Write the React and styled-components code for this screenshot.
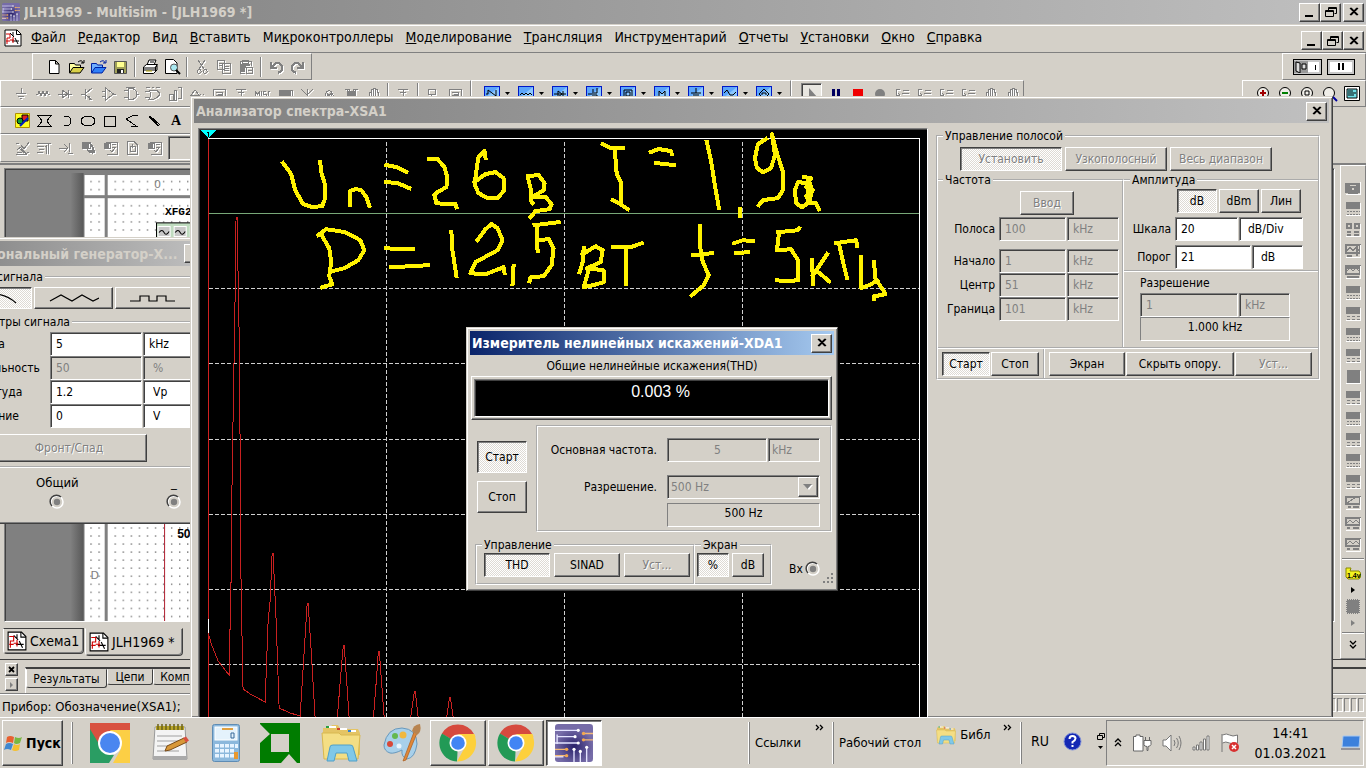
import React, { useId } from 'react';
import styled, { createGlobalStyle, css } from 'styled-components';

const FACE = '#d4d0c8';
const DARK = '#404040';
const MID = '#808080';
const UI = '"DejaVu Sans Condensed", "Noto Sans", sans-serif';

const Global = createGlobalStyle`
  * { box-sizing: border-box; }
  html, body, #root { height: 100%; }
  body { margin: 0; overflow: hidden; background: ${FACE}; color: #000; font: 12px/16px ${UI}; }
  button, input, select { font: inherit; color: inherit; margin: 0; border-radius: 0; }
  svg { display: block; flex: none; }
`;

const raised = css`
  border: 1px solid;
  border-color: #fff ${DARK} ${DARK} #fff;
  box-shadow: inset -1px -1px 0 ${MID};
`;
const sunken = css`
  border: 1px solid;
  border-color: ${MID} #fff #fff ${MID};
  box-shadow: inset 1px 1px 0 ${DARK};
`;
const checker = css`
  background: repeating-conic-gradient(#fff 0 25%, #dedad4 0 50%) 0 0 / 2px 2px;
`;

/* ---------- shared controls ---------- */
const Push = styled.button`
  ${raised}
  background: ${FACE};
  padding: 0;
  width: ${(p) => p.$w}px;
  height: ${(p) => p.$h || 24}px;
  text-align: center;
  white-space: nowrap;
  flex: none;
  display: flex;
  align-items: center;
  justify-content: center;
  ${(p) => p.$on && css`
    ${checker}
    border-color: ${DARK} #fff #fff ${DARK};
    box-shadow: inset 1px 1px 0 ${MID};
  `}
  &:disabled { color: ${MID}; text-shadow: 1px 1px 0 #fff; }
`;

const Box = styled.input`
  ${sunken}
  width: ${(p) => p.$w}px;
  height: 24px;
  padding: 0 4px 0 ${(p) => p.$pad || 5}px;
  background: #fff;
  text-align: ${(p) => p.$align || 'left'};
  flex: none;
  outline: none;
  &:disabled { background: ${FACE}; color: ${MID}; }
`;

const Result = styled.output`
  display: block;
  border: 1px solid;
  border-color: ${MID} #fff #fff ${MID};
  height: ${(p) => p.$h || 24}px;
  width: ${(p) => p.$w}px;
  line-height: 18px;
  text-align: center;
`;

const Group = styled.fieldset`
  margin: 0;
  padding: 0;
  min-width: 0;
  border: 2px groove #fff;
  border-width: ${(p) => p.$edges || '2px'};
  width: ${(p) => (p.$w ? `${p.$w}px` : 'auto')};
  flex: ${(p) => (p.$grow ? '1' : 'none')};
`;
const Legend = styled.legend`
  margin-left: ${(p) => p.$x || 5}px;
  padding: 0 2px;
  height: 16px;
  line-height: 16px;
`;

const FieldRow = styled.div`
  display: flex;
  align-items: center;
  gap: 1px;
  margin-top: ${(p) => p.$mt || 0}px;
`;
const RowLabel = styled.label`
  width: ${(p) => p.$w}px;
  text-align: ${(p) => p.$align || 'right'};
  margin-right: ${(p) => p.$gap || 3}px;
  flex: none;
  white-space: nowrap;
`;

function Field({ label, labelW, gap, align, value, w, unit, unitW, disabled, unitPad, mt, valueAlign }) {
  const id = useId();
  return (
    <FieldRow $mt={mt}>
      <RowLabel htmlFor={id} $w={labelW} $gap={gap} $align={align}>{label}</RowLabel>
      <Box id={id} $w={w} defaultValue={value} disabled={disabled} $align={valueAlign} />
      <Box $w={unitW} defaultValue={unit} disabled={disabled} $pad={unitPad} aria-label={`${label} ${unit}`} />
    </FieldRow>
  );
}

function Terminal() {
  return (
    <svg width="16" height="16" viewBox="0 0 16 16">
      <circle cx="8" cy="8" r="6" fill={FACE} stroke="#fff" strokeWidth="1.500" />
      <path d="M3 12A6 6 0 0 1 12 3" fill="none" stroke={DARK} strokeWidth="1.500" />
      <circle cx="8" cy="8" r="3.200" fill={MID} />
    </svg>
  );
}

/* ---------- window chrome ---------- */
const Caption = styled.header`
  display: flex;
  align-items: center;
  height: ${(p) => p.$h || 24}px;
  padding: 0 2px;
  flex: none;
  background: linear-gradient(90deg, ${(p) => (p.$active ? '#0a246a, #a6caf0' : '#808080, #c0c0c0')});
  color: ${(p) => (p.$active ? '#fff' : FACE)};
`;
const CaptionText = styled.h2`
  margin: 0;
  flex: 1;
  font: bold ${(p) => p.$size || 14}px/20px ${UI};
  white-space: nowrap;
  overflow: hidden;
`;
const SysButton = styled.button`
  ${raised}
  background: ${FACE};
  width: 21px;
  height: 19px;
  padding: 0;
  flex: none;
  display: grid;
  place-items: center;
`;
const SysGroup = styled.div`
  display: flex;
  flex: none;
  margin-top: ${(p) => p.$mt || 0}px;
  & > :last-child { margin-left: ${(p) => p.$gap || 0}px; }
`;
const CROSS = 'M3 2L10 9M4 2L11 9M10 2L3 9M11 2L4 9';
const SYS = {
  close: <path d={CROSS} stroke="#000" strokeWidth="1.200" />,
  min: <path d="M2 10h8" stroke="#000" strokeWidth="2" />,
  restore: <path d="M4.500 4V1.500h8v6h-2M4 2.500h9M1.500 4.500h8v6h-8zM1 5.500h9" stroke="#000" fill="none" />,
};
function Sys({ kind, label }) {
  return (
    <SysButton aria-label={label}>
      <svg width="14" height="12" viewBox="0 0 14 12">{SYS[kind]}</svg>
    </SysButton>
  );
}
const Window = styled.section`
  position: absolute;
  display: flex;
  flex-direction: column;
  background: ${FACE};
  border: 1px solid;
  border-color: ${FACE} ${DARK} ${DARK} ${FACE};
  box-shadow: inset 1px 1px 0 #fff, inset -1px -1px 0 ${MID};
  padding: 3px;
`;

/* ---------- small glyphs ---------- */
const GLYPH = {
  ground: 'M8 2v5M3 7.500h10M5 10.500h6M7 12.500h2',
  resistor: 'M1 8h2l1-3 2 5 2-5 2 5 2-5 1 3h2',
  diode: 'M1 8h14M5 4v8l6-4zM11.500 4v8',
  transistor: 'M2 8h4M6.500 3v10M7 7l6-5M7 9l6 5M10 10v3h3',
  opamp: 'M1 5.500h3M1 10.500h3M4.500 2v12l8-6zM12 8h3',
  gate: 'M1 4.500h4M1 11.500h4M5 2.500h4q5 1 5 5.500t-5 5.500h-4zM3 1h9M14 8h2',
  cmos: 'M0 5.500h4M0 11.500h4M4 4q3 4 0 9h5q4-1 6-5-2-4-6-4zM1 1.500h4M7 1.500h2M11 1.500h4',
  bars: 'M2.500 8v6h4v-6zM7.500 4v10h2V4zM10.500 1.500h4v11h-4',
  wedge: 'M2 9l4-5 4 5zM11 8.500h1M14 8.500h1',
  misc: 'M0.500 11V5.500L2.500 8l2-2.500V11M6.500 5v6M11 5.500H8.500v2.500H11v2.500H8.500M15 5.500h-2v5h2',
  box: 'M2.500 3.500h12v9h-12zM5 6h6v3H5M7 8h4',
  block: 'M2 4h13v9H2zM3 5h11M3 7h11M3 9h11M3 11h11M3 6h11M3 8h11M3 10h11',
  antenna: 'M2 3l6 6 6-6M8 3v11',
  motor: 'M1 12h3V9q4-9 8 0v3h3M6 12V7l2 3 2-3v5',
  chip: 'M2 3h4v2h4V3h5M4 4v9M6 5v8M8 5v8M10 5v8M12 4v9M5 5v8M7 5v8M9 5v8M11 5v8',
  hand: 'M4 13V6h2V3h2V2h2v1h2v3h1v7M6 5v6M8 4v7M10 4v7',
  tree: 'M3 3.500h10M5 6.500h6M8 3v9M3 10.500h10M5 12.500h2M9 12.500h2',
  node: 'M3 3.500h7v5H3zM6 9v4M9 12.500h6',
  step: 'M6 3.500H2.500V9H6M4 7l2 2-2 2M9 4.500h6M8 7.500h7M9 10.500h6M7 13.500h8',
  cut: 'M4 1l6 9M11 1L5 10M5 10.500a2 2 0 1 0 .1 0M11 10.500a2 2 0 1 0 .1 0',
  copy: 'M1.500 1.500h7v9h-7zM6.500 4.500h8v10h-8zM3 4h4M3 6.500h3M8 7.500h5M8 9.500h5M8 11.500h5',
  paste: 'M2 2h11v5M2 2v12h5M4 1h6v3H4zM3 5h9M3 7h5M3 9h4M3 11h4M3 6h9M3 8h5M3 10h4M3 12h4M8.500 8.500h6v6h-6zM10 11h4',
  undo: 'M3 3v6h6M4 8q5-7 9-2t-3 8',
  redo: 'M13 3v6H7M12 8q-5-7-9-2t3 8',
  poly: 'M2 2.500h13L11 8l4 5.500H2L6 8z',
  arc: 'M6 3q7 0 7 5t-7 5',
  ellipse: 'M1 8q0-4.500 7-4.500T15 8t-7 4.500T1 8',
  rect: 'M2.500 3.500h11v10h-11z',
  zig: 'M14 2.500H9L2 6l11 7.500M7 13.500h7',
  line: 'M3 3l10 10M3 4l9 9M4 3l10 9',
  check: 'M2 3h3M7 5l3 4 5-7M3 10q3-5 6 0t6 2M3 12h5M2 14h11M5 8l7 6',
  para: 'M1 3.500h14M1 6.500h7M3 9.500h5M1 12.500h6M10 5v9M12.500 4v10M9 6h2',
  jump: 'M1 8h8M6 4l4 4-4 4M11 3v9M10 13h5',
  globes: 'M2 2h8v6H2zM3 4h6M3 6h6M5 2v6M8 9a3 3 0 1 0 4-2 3 3 0 1 0-4 2M9 11h6M12 8v6M3 3h6M3 5h6M3 7h6M9 10h6M9 12h6',
  report: 'M4 2h11v12H5M2 3h6v5H2zM3 4h4M3 6h4M3 5h4M3 7h4M10 4h4M10 7h4M8 10l2 2 3-4',
  doc: 'M3 1.500h7l3 3V14H3zM6 6h5v5H6zM8 4v4',
};
const GlyphSvg = styled.svg`
  filter: ${(p) => (p.$off ? 'drop-shadow(1px 1px 0 #fff)' : 'none')};
`;
function Glyph({ name, off }) {
  return (
    <GlyphSvg $off={off} width="16" height="16" viewBox="0 0 16 16" fill="none"
      stroke={off ? MID : '#000'} strokeWidth={name === 'undo' || name === 'redo' ? 2.4 : 1} shapeRendering="crispEdges">
      <path d={GLYPH[name]} />
    </GlyphSvg>
  );
}

function SchemeIcon({ size = 18 }) {
  return (
    <svg width={size} height={size} viewBox="0 0 18 18">
      <path d="M1 1h12l4 4v12H1z" fill="#fff" stroke="#000" />
      <path d="M12.500 1v4.500H17M9 3v4M8 12h7M11 9l3 6M6 4l4 4" stroke="#000" fill="none" />
      <path d="M2 5h4v4H3v6M6 11h4M9 8v6M2 12h4" stroke="#d00000" fill="none" />
    </svg>
  );
}
function CircuitLogo({ size }) {
  return (
    <svg width={size} height={size} viewBox="0 0 36 36">
      <defs>
        <radialGradient id="circ" cx=".5" cy=".6"><stop offset="0" stopColor="#28206a" /><stop offset="1" stopColor="#766ca8" /></radialGradient>
      </defs>
      <rect width="36" height="36" rx="3" fill="url(#circ)" />
      <g fill="none" stroke="#e4e4ff" strokeWidth="1.300">
        <path d="M0 6h21M2 19v-7h16M2 12v-2M0 18h21M18 36V24M24 36V26M30 36V22M0 31h8" />
      </g>
      <path d="M36 9h-9M36 15h-9M0 24h11M0 30h11" stroke="#f2b878" strokeWidth="1.300" />
      <g fill="#fff"><circle cx="22" cy="6" r="1.500" /><circle cx="19" cy="12" r="1.500" /><circle cx="22" cy="18" r="1.500" /><circle cx="18" cy="24" r="1.500" /><circle cx="24" cy="26" r="1.500" /><circle cx="30" cy="22" r="1.500" /></g>
      <g fill="#f2a850"><circle cx="27" cy="9" r="1.600" /><circle cx="27" cy="15" r="1.600" /><circle cx="11" cy="24" r="1.600" /><circle cx="11" cy="30" r="1.600" /></g>
    </svg>
  );
}

/* ---------- main frame ---------- */
const Desktop = styled.div`
  height: 100vh;
  display: flex;
  flex-direction: column;
  overflow: hidden;
`;
const Frame = styled.main`
  position: relative;
  flex: 1;
  min-height: 0;
  display: flex;
  flex-direction: column;
  overflow: hidden;
`;
const AppTitle = styled(Caption)`
  padding: 0 2px 0 2px;
  gap: 4px;
  margin-bottom: 1px;
`;
const MenuBar = styled.nav`
  display: flex;
  align-items: center;
  height: 28px;
  flex: none;
  padding: 0 2px 2px 4px;
  border-top: 1px solid #fff;
  border-bottom: 1px solid ${MID};
`;
const MenuList = styled.ul`
  display: flex;
  flex: 1;
  gap: 12px;
  list-style: none;
  margin: 0 0 2px 9px;
  padding: 0;
`;
const MenuItem = styled.button`
  border: 0;
  padding: 0;
  background: none;
  font-size: 14px;
  line-height: 20px;
  white-space: nowrap;
`;
const MENU = [['', 'Ф', 'айл'], ['', 'Р', 'едактор'], ['Вид'], ['', 'В', 'ставить'], ['Ми', 'к', 'роконтроллеры'], ['', 'М', 'оделирование'],
  ['', 'Т', 'рансляция'], ['Инстру', 'м', 'ентарий'], ['', 'О', 'тчеты'], ['', 'У', 'становки'], ['', 'О', 'кно'], ['', 'С', 'правка']];

const ToolLine = styled.div`
  display: flex;
  height: ${(p) => p.$h || 27}px;
  flex: none;
`;
const Bar = styled.div`
  display: flex;
  align-items: center;
  gap: ${(p) => p.$gap || 6}px;
  margin-left: ${(p) => (p.$end ? 'auto' : `${p.$ml || 0}px`)};
  padding: 0 ${(p) => p.$px || 6}px;
  width: ${(p) => (p.$w ? `${p.$w}px` : 'auto')};
  flex: none;
  border: 1px solid;
  border-color: #fff ${MID} ${MID} #fff;
`;
const Tool = styled.button`
  border: 0;
  padding: 0;
  width: 16px;
  height: 18px;
  background: none;
  flex: none;
  display: grid;
  place-items: center;
  overflow: visible;
  font: bold 14px/16px "Liberation Serif", serif;
`;
const Rule = styled.i`
  width: 2px;
  height: ${(p) => p.$h || 20}px;
  border-left: 1px solid ${MID};
  border-right: 1px solid #fff;
  flex: none;
`;
const FileBar = styled(Bar)`
  justify-content: space-between;
  padding: 0 5px 0 13px;
`;
const PartsBar = styled(Bar)`
  padding-left: 12px;
`;
const BluePart = styled.button`
  display: flex;
  align-items: center;
  gap: 5px;
  width: 28px;
  height: 18px;
  border: 0;
  padding: 0;
  background: none;
  flex: none;
`;
const ToggleTool = styled(Tool)`
  width: 21px;
  height: 21px;
  ${sunken}
  background: #e8e6e0;
`;
const SimSwitch = styled.button`
  width: 31px;
  height: 16px;
  padding: 0;
  border: 1px solid #000;
  background: #fff;
  box-shadow: inset 0 0 0 2px #c8c8c8;
  display: grid;
  place-items: center;
`;

function BlueTool({ d, name }) {
  return (
    <BluePart aria-label={name}>
      <svg width="16" height="16" viewBox="0 0 16 16">
        <rect x=".5" y=".5" width="15" height="15" fill="#8cc8ff" stroke="#0018c8" />
        <path d="M1 1h14L1 12z" fill="#3c90f8" opacity=".6" />
        <path d={d} fill="none" stroke="#000" />
      </svg>
      <svg width="6" height="4" viewBox="0 0 6 4"><path d="M0 0h5L2.500 3z" /></svg>
    </BluePart>
  );
}
const BLUE = ['M2 8h2V4l8 6M12 4v8', 'M2 9l2-2 2 2 2-2 2 2 2-2 2 2', 'M2 8h12M6 5v6l4-3zM11 5v6', 'M2 8h4M7 3v10M8 7h3V2M8 9h3v4', 'M4 4h8v8H4zM6 6h4v4H6z',
  'M5 12V5l3 3 3-3v7', 'M8 2v5M3 7h10M5 9h6M7 11h2', 'M2 7l3-3 3 5 3 0 3-3', 'M8 3l5 5-5 5-5-5zM6 9V7h4v2'];
const PARTS = ['ground', 'resistor', 'diode', 'transistor', 'opamp', 'gate', 'cmos', 'bars', 'wedge', 'box', 'tree', 'misc', 'block', 'antenna', 'motor', 'chip', 'hand'];

function FileTools() {
  return (
    <FileBar $w={280} $ml={32}>
      <Tool aria-label="Создать"><svg width="14" height="16" viewBox="0 0 14 16"><path d="M2.500 1.500h6l3.500 3.500v9.500h-9.500zM8.500 1.500V5H12" fill="#fff" stroke="#000" /></svg></Tool>
      <Tool aria-label="Открыть"><svg width="17" height="16" viewBox="0 0 17 16"><path d="M1.500 14V4.500h5l1 1.500h5v3" fill="#ffffa0" stroke="#000" /><path d="M1.500 14L5 8.500h11L12 14z" fill="#d8d048" stroke="#000" /><path d="M10 3q4-3 5 1M13 4h3V1" fill="none" stroke="#000" /></svg></Tool>
      <Tool aria-label="Открыть пример"><svg width="17" height="16" viewBox="0 0 17 16"><path d="M1.500 14V4.500h5l1 1.500h5v3" fill="#70b0ff" stroke="#0020a0" /><path d="M1.500 14L5 8.500h11L12 14z" fill="#3080f8" stroke="#0020a0" /><path d="M10 3q4-3 5 1M13 4h3V1" fill="none" stroke="#0020a0" /></svg></Tool>
      <Tool aria-label="Сохранить"><svg width="15" height="16" viewBox="0 0 15 16"><path d="M1.500 2.500h12v12h-12z" fill="#a0a058" stroke="#555" /><path d="M4 3h7v5H4z" fill="#ffff90" /><path d="M4 10h7v4H4z" fill="#222" /><path d="M8 11h2v3H8z" fill="#fff" /></svg></Tool>
      <Rule />
      <Tool aria-label="Печать"><svg width="17" height="16" viewBox="0 0 17 16"><path d="M5 6l2-5h7l-2 5M1.500 8l3-2.500h11l-2 3v4l-2 2h-10z" fill="#fff" stroke="#000" /><path d="M2 9h11l2-3M2 11h11M8 3h4M13 13l2-2V7" fill="none" stroke="#000" /><path d="M4 12h6" stroke="#b0a000" /></svg></Tool>
      <Tool aria-label="Просмотр"><svg width="17" height="16" viewBox="0 0 17 16"><path d="M1.500.5h8L13 4v10.500H1.500z" fill="#fff" stroke="#000" /><circle cx="10" cy="8.500" r="3.500" fill="#a8e8f0" stroke="#555" /><path d="M12 11l4 4" stroke="#000" strokeWidth="2" /></svg></Tool>
      <Rule />
      {['cut', 'copy', 'paste'].map((n) => <Tool key={n} aria-label={n}><Glyph name={n} off /></Tool>)}
      <Rule />
      {['undo', 'redo'].map((n) => <Tool key={n} aria-label={n}><Glyph name={n} off /></Tool>)}
    </FileBar>
  );
}

function Zoomer({ mark }) {
  return (
    <svg width="16" height="16" viewBox="0 0 16 16">
      <circle cx="7" cy="7" r="5.500" fill="#f0eee8" stroke="#000" />
      <path d="M11 11l4 4" stroke="#0000a0" strokeWidth="2" />
      {mark}
    </svg>
  );
}

/* ---------- workspace ---------- */
const Middle = styled.div`
  flex: 1;
  min-height: 0;
  display: flex;
  align-items: flex-start;
  margin-top: 1px;
  border-top: 2px solid ${MID};
  border-bottom: 1px solid ${DARK};
`;
const Document = styled.div`
  flex: 1;
  min-width: 0;
  align-self: stretch;
  display: flex;
  flex-direction: column;
`;
const Sheet = styled.div`
  ${sunken}
  margin: 3px 5px 0 4px;
  flex: 1;
  min-height: 0;
  overflow: hidden;
  background: ${MID};
`;
const InstrumentBar = styled.aside`
  width: 26px;
  border: 1px solid;
  border-color: #fff ${MID} ${MID} #fff;
  display: flex;
  flex-direction: column;
  align-items: center;
  padding: 14px 0 8px;
  gap: 6px;
`;
const SideTool = styled.button`
  border: 0;
  padding: 0;
  background: none;
  height: 15px;
  flex: none;
`;
const HRule = styled.i`
  width: 22px;
  height: 2px;
  flex: none;
  border-top: 1px solid ${MID};
  border-bottom: 1px solid #fff;
`;
const SIDE = [
  'M1 3v9h2V3M13 3v9h2V3M4 4h8v9H4zM6 7h4v4H6z', null, 'M2 2h4v4H2zM10 2h4v4h-4zM2 10h4M9 10h5M2 13h4M9 13h5', 'M1 2h14v8H1zM2 8l3-4 3 4 3-4 3 4M2 13h5M12 2v11',
  'M1 2h14v8H1zM2 7l3-3 3 3 3-3 3 3M2 13h12M2 4h12', null, null, null, null, null, null, null, null, null, null, 'M1 2h14v7H1zM2 8L11 2M3 12h3M8 12h6', 'M1 2h14v7H1zM2 7l3-3 3 3 3-3 3 3M2 12h3M8 12h6', 'M1 2h14v7H1zM2 7l3-3 3 3 3-3 3 3M2 12h3M8 12h6',
];
const BLOCKS = 'M1 1h14v7H1z';

function Instrument({ d, i }) {
  return (
    <svg width="16" height="15" viewBox="0 0 16 15" shapeRendering="crispEdges">
      {d ? <path d={d} fill="none" stroke={MID} strokeWidth="1.300" />
        : <g><path d={i === 9 ? 'M2 1h13v13H2z' : BLOCKS} fill={MID} /><path d="M2 10.500h13M2 13.500h13" stroke={MID} strokeDasharray={i % 2 ? '2 1' : '3 2'} /></g>}
      <path d="M1 14.500h14.500V2" stroke="#fff" fill="none" />
    </svg>
  );
}

function Schematic() {
  return (
    <svg width="100%" height="100%" viewBox="5 168 1320 452" preserveAspectRatio="xMinYMin slice">
      <defs>
        <pattern id="dots" width="8" height="8" patternUnits="userSpaceOnUse"><rect x="2" y="4" width="1" height="1" fill="#000" /></pattern>
        <linearGradient id="edge"><stop offset="0" stopColor="#808080" /><stop offset="1" stopColor="#585858" /></linearGradient>
      </defs>
      <rect x="70" y="172" width="13" height="460" fill="url(#edge)" />
      {[[84, 174, 20, 20], [107, 174, 90, 20], [84, 197, 20, 440], [107, 197, 90, 440]].map(([x, y, w, h]) => (
        <g key={`${x}-${y}`}><rect x={x} y={y} width={w} height={h} fill="#fff" /><rect x={x + 4} y={y + 3} width={w - 6} height={h - 3} fill="url(#dots)" /></g>
      ))}
      <g fill="#808080" fontFamily="DejaVu Sans" fontSize="11">
        <text x="153" y="187">0</text><text x="90" y="575">D</text>
      </g>
      <text x="164" y="214" fontFamily="Liberation Mono" fontWeight="bold" fontSize="11">XFG2</text>
      <rect x="155.500" y="221.500" width="60" height="50" fill="#c0dcc0" stroke="#000" />
      {[157, 173, 189].map((x) => <g key={x}><path d={`M${x} 225h12v10H${x}z`} fill="#c8c8c8" stroke="#fff" /><path d={`M${x + 1} 231q3-4 5 0t5-1`} fill="none" stroke="#000" /></g>)}
      <path d="M163.500 500V632" stroke="#b02030" />
      <text x="176" y="535" fontFamily="Liberation Sans" fontWeight="bold" fontSize="12">50</text>
    </svg>
  );
}

const SheetTabs = styled.div`
  display: flex;
  height: 37px;
  flex: none;
  padding: 5px 0 0 3px;
  gap: 1px;
  align-items: flex-start;
`;
const SheetTab = styled.button`
  display: flex;
  align-items: center;
  gap: 3px;
  height: ${(p) => (p.$on ? 28 : 26)}px;
  margin-top: 1px;
  padding: 0 3px;
  background: ${FACE};
  border: 1px solid;
  border-color: ${(p) => (p.$on ? FACE : DARK)} ${DARK} ${DARK} #fff;
  border-radius: 0 0 4px 4px;
  box-shadow: inset -1px -1px 0 ${MID};
  font-size: 14px;
  white-space: nowrap;
  width: ${(p) => p.$w}px;
`;
const ResultPane = styled.div`
  display: flex;
  height: 34px;
  flex: none;
  padding: 3px 0 0 5px;
  border-bottom: 1px solid ${MID};
`;
const PaneButtons = styled.div`
  display: flex;
  flex-direction: column;
  gap: 2px;
  margin-right: 7px;
`;
const TinyButton = styled.button`
  ${raised}
  width: 13px;
  height: 13px;
  padding: 0;
  background: ${FACE};
  display: grid;
  place-items: center;
`;
const PaneTabs = styled.div`
  display: flex;
  flex: 1;
  align-items: flex-start;
  margin-top: 4px;
  border-top: 2px solid ${DARK};
  border-left: 1px solid #fff;
`;
const PaneTab = styled.button`
  height: ${(p) => (p.$on ? 19 : 16)}px;
  width: ${(p) => p.$w}px;
  padding: 0;
  background: ${FACE};
  border: 1px solid;
  border-color: ${FACE} ${DARK} ${DARK} #fff;
  border-radius: 0 0 3px 3px;
  white-space: nowrap;
  overflow: hidden;
  line-height: ${(p) => (p.$on ? 16 : 12)}px;
  font-size: 12px;
`;
const Status = styled.footer`
  height: 23px;
  flex: none;
  padding: 3px 2px 0;
  border-top: 1px solid #fff;
  display: flex;
  justify-content: space-between;
  font-size: 13px;
  line-height: 17px;
  white-space: nowrap;
`;
const Leds = styled.div`
  display: flex;
  gap: 1px;
`;
const Led = styled.i`
  width: 6px;
  height: 14px;
  border: 1px solid;
  border-color: ${MID} #fff #fff ${MID};
`;

/* ---------- function generator ---------- */
const GenWindow = styled(Window)`
  left: -65px;
  top: 237px;
  width: 276px;
  height: 287px;
`;
const GenGroup = styled(Group)`
  margin: ${(p) => p.$mt || 0}px 2px 0 8px;
`;
const WaveRow = styled.div`
  display: flex;
  gap: 2px;
  padding: 2px 0 5px 4px;
`;
const GenFields = styled.div`
  padding: 2px 0 4px 10px;
`;
const EdgeButton = styled(Push)`
  margin: 6px 0 0 32px;
`;
const Terminals = styled.div`
  display: flex;
  justify-content: space-between;
  padding: 7px 25px 0 97px;
`;
const TerminalCell = styled.div`
  display: flex;
  flex-direction: column;
  align-items: center;
  gap: 3px;
  font-size: 13px;
`;
const WAVES = ['M2 13Q12 4 25 4T48 13', 'M1 11L12 5l11 6 10-6 11 6 6-3', 'M0 11h10V6h9v5h8V6h9v5h9'];

function Generator() {
  const row = { labelW: 87, align: 'left', w: 92, unitW: 50 };
  return (
    <GenWindow>
      <Caption $h={25}>
        <CaptionText>Функциональный генератор-X...</CaptionText>
        <Sys kind="close" label="Закрыть генератор" />
      </Caption>
      <GenGroup $mt={3} $edges="2px 2px 0">
        <Legend>Форма сигнала</Legend>
        <WaveRow>
          {WAVES.map((d, i) => (
            <Push key={d} $w={79} $h={22} $on={i === 0} aria-label={`Форма ${i + 1}`}>
              <svg width="50" height="16" viewBox="0 0 50 16"><path d={d} fill="none" stroke="#000" strokeWidth="1.200" /></svg>
            </Push>
          ))}
        </WaveRow>
      </GenGroup>
      <GenGroup>
        <Legend>Параметры сигнала</Legend>
        <GenFields>
          <Field {...row} label="Частота" value="5" unit="kHz" />
          <Field {...row} label="Длительность" value="50" unit="%" unitPad={9} disabled />
          <Field {...row} label="Амплитуда" value="1.2" unit="Vp" unitPad={9} />
          <Field {...row} label="Смещение" value="0" unit="V" unitPad={9} />
          <EdgeButton $w={156} $h={28} disabled>Фронт/Спад</EdgeButton>
        </GenFields>
      </GenGroup>
      <Terminals>
        <TerminalCell>Общий<Terminal /></TerminalCell>
        <TerminalCell>_<Terminal /></TerminalCell>
      </Terminals>
    </GenWindow>
  );
}

/* ---------- spectrum analyser ---------- */
const SpectrumWindow = styled(Window)`
  left: 190px;
  right: 33px;
  top: 96px;
  bottom: 0;
  padding: 2px 3px 0;
  border-bottom: 0;
`;
const SpectrumBody = styled.div`
  flex: 1;
  min-height: 0;
  display: flex;
  padding: 5px 9px 0 4px;
  gap: 8px;
`;
const Plot = styled.div`
  ${sunken}
  border-bottom: 0;
  padding: 1px 1px 0;
  flex: 1;
  overflow: hidden;
  background: #000;
`;
const Controls = styled.div`
  width: 384px;
  flex: none;
`;
const BandRow = styled.div`
  display: flex;
  gap: 3px;
  padding: 3px 0 1px 22px;
`;
const Split = styled.div`
  display: flex;
  height: 175px;
`;
const EnterButton = styled(Push)`
  margin: 3px 0 2px 82px;
`;
const UnitButtons = styled.div`
  display: flex;
  gap: 2px;
  padding: 1px 0 4px 53px;
`;
const Resolution = styled.div`
  border-top: 2px groove #fff;
  margin-top: 1px;
  padding: 3px 0 0 16px;
`;
const Commands = styled.div`
  display: flex;
  height: 31px;
  border-top: 2px groove #fff;
`;
const CommandSet = styled.div`
  display: flex;
  gap: 1px;
  padding: 3px 4px 0;
  border-right: ${(p) => (p.$rule ? '2px groove #fff' : '0')};
`;

const INK = [
  '283,163 291,174 295,190 303,204 312,207 322,206 325,198 325,185 321,172 320,162', '350,205 350,191 355,189 361,190 366,197 369,206',
  '386,165 396,167 406,172', '386,182 397,183 409,188', '429,159 437,159 444,167 447,178 446,187 437,192 434,195 436,203 446,204 455,204 456,207',
  '485,158 484,151 478,157 476,170 474,184 478,193 487,198 497,198 504,190 503,178 495,172 485,174 474,182',
  '532,203 530,200 530,188 527,176 538,175 544,183 543,190 532,197 545,197 551,204 549,209 535,211 530,217',
  '602,144 610,148 622,148', '614,149 616,174 620,182 620,203', '612,200 618,203 627,209', '650,152 658,149 670,151 671,154', '655,163 673,165',
  '706,142 710,160 714,185 718,208', '739,209 739,216', '765,139 757,144 754,158 756,168 762,172 770,168 774,155 771,134 775,150 782,172 782,190 777,198 762,200 758,205',
  '805,183 797,182 794,190 795,203 801,207 807,203 807,178 811,190 808,203 815,203 818,209', '803,177 810,178 805,187 812,190 805,196',
  '318,235 326,229 345,232 360,240 364,250 358,260 344,268 332,271', '322,236 329,248 331,262 329,276 332,284 322,287', '386,248 398,249 413,249', '391,267 410,266 428,265',
  '451,232 452,250 456,276', '477,240 485,229 491,224 497,228 502,240 497,250 475,262 470,273 485,274 503,267 504,273', '513,266 512,284',
  '534,225 558,222', '536,226 537,251', '537,240 548,239 553,248 551,265 543,276 530,277 529,281',
  '583,248 582,262 579,272', '582,254 595,246 602,250 600,262 586,268 603,270 603,282 592,285 583,287 588,270', '612,247 630,247 641,243', '625,251 625,284',
  '699,226 699,245 702,262 708,275 703,285 691,295', '692,255 711,253', '733,243 742,240 752,241', '735,253 747,252',
  '777,232 797,230 798,228', '778,233 776,250 790,249 797,260 797,280 783,281 776,280', '811,260 812,284', '812,275 826,254', '815,270 828,281',
  '835,243 855,240 856,246', '838,244 842,262 846,278', '860,257 860,275 860,288 870,284 876,280', '873,262 874,278 882,290 884,294 873,296 873,299',
];
const TRACE = '208,632 212,645 218,660 229,674 231,580 232,480 233,420 235,300 236,217 237,217 239,330 240,440 241,587 243,688 250,693 265,701 268,620 270,600 272,553 273,553 276,620 279,707 290,712 300,715 304,650 307,603 308,603 311,650 315,718';
const PEAKS = ['337,718 340,680 343,645 344,645 349,718', '373,718 376,680 378,651 379,651 384,718', '410,718 414,691 415,691 418,718', '446,718 449,697 450,697 453,718'];

function Spectrum() {
  return (
    <svg width="100%" height="100%" viewBox="200 130 726 586" preserveAspectRatio="xMinYMin slice" shapeRendering="crispEdges">
      <g stroke="#d0d0d0" strokeDasharray="4 2">
        {[386.5, 563.5, 741.5].map((x) => <path key={x} d={`M${x} 142V720`} />)}
        {[288.5, 363.5, 438.5, 513.5, 588.5, 663.5].map((y) => <path key={y} d={`M209 ${y}H918`} />)}
      </g>
      <path d="M209 213.500H918" stroke="#78a878" />
      <path d="M208 138.500H918.500V720" fill="none" stroke="#fff" />
      <path d="M208.500 139V720" stroke="#d02020" />
      <path d="M208.500 618v14" stroke="#fff" />
      <path d="M200 130h17l-8.500 8z" fill="#00ffff" />
      <path d="M206.500 132.500h2V137" stroke="#000" fill="none" />
      <g fill="none" stroke="#c82020">
        <polyline points={TRACE} />
        {PEAKS.map((p) => <polyline key={p} points={p} />)}
      </g>
      <g fill="none" stroke="#fff200" strokeWidth="4" strokeLinecap="square" strokeLinejoin="round">
        {INK.map((p) => <polyline key={p} points={p} />)}
      </g>
    </svg>
  );
}

function Analyser() {
  const freq = { labelW: 57, w: 67, unit: 'kHz', unitW: 52, disabled: true };
  const res = useId();
  return (
    <SpectrumWindow>
      <Caption>
        <CaptionText>Анализатор спектра-XSA1</CaptionText>
        <Sys kind="close" label="Закрыть анализатор" />
      </Caption>
      <SpectrumBody>
        <Plot><Spectrum /></Plot>
        <Controls>
          <Group>
            <Legend>Управление полосой</Legend>
            <BandRow>
              <Push $w={102} $on disabled>Установить</Push>
              <Push $w={102} disabled>Узкополосный</Push>
              <Push $w={102} disabled>Весь диапазон</Push>
            </BandRow>
            <Split>
              <Group $w={186} $edges="2px 2px 0 0">
                <Legend>Частота</Legend>
                <EnterButton $w={54} disabled>Ввод</EnterButton>
                <Field {...freq} label="Полоса" value="100" />
                <Field {...freq} label="Начало" value="1" mt={8} />
                <Field {...freq} label="Центр" value="51" />
                <Field {...freq} label="Граница" value="101" />
              </Group>
              <Group $grow $edges="2px 0 0 0">
                <Legend $x={6}>Амплитуда</Legend>
                <UnitButtons>
                  <Push $w={40} $on>dB</Push>
                  <Push $w={40}>dBm</Push>
                  <Push $w={40}>Лин</Push>
                </UnitButtons>
                <Field label="Шкала" labelW={47} value="20" w={63} unit="dB/Div" unitW={64} unitPad={8} />
                <Field label="Порог" labelW={47} value="21" w={76} unit="dB" unitW={51} unitPad={8} mt={4} />
                <Resolution>
                  <label htmlFor={res}>Разрешение</label>
                  <FieldRow $mt={2}>
                    <Box id={res} $w={98} defaultValue="1" disabled />
                    <Box $w={51} defaultValue="kHz" disabled aria-label="Единица разрешения" />
                  </FieldRow>
                  <Result $w={150}>1.000 kHz</Result>
                </Resolution>
              </Group>
            </Split>
            <Commands>
              <CommandSet $rule>
                <Push $w={48} $on>Старт</Push>
                <Push $w={48}>Стоп</Push>
              </CommandSet>
              <CommandSet>
                <Push $w={76}>Экран</Push>
                <Push $w={108}>Скрыть опору.</Push>
                <Push $w={77} disabled>Уст...</Push>
              </CommandSet>
            </Commands>
          </Group>
        </Controls>
      </SpectrumBody>
    </SpectrumWindow>
  );
}

/* ---------- distortion meter ---------- */
const MeterWindow = styled(Window)`
  left: 466px;
  top: 327px;
  width: 372px;
  height: 264px;
`;
const MeterCaption = styled.div`
  text-align: center;
  height: 21px;
  line-height: 22px;
`;
const ReadoutFrame = styled.div`
  ${raised}
  height: 44px;
  margin: 0 2px 0 1px;
  padding: 2px;
`;
const Readout = styled.output`
  ${sunken}
  display: block;
  height: 38px;
  padding-left: 18px;
  background: #000;
  color: #fff;
  font: 16px/24px "Liberation Sans", sans-serif;
  text-align: center;
`;
const MeterMain = styled.div`
  display: flex;
  gap: 9px;
  padding: 5px 2px 0 7px;
`;
const RunButtons = styled.div`
  display: flex;
  flex-direction: column;
  gap: 8px;
  padding-top: 16px;
`;
const MeterBox = styled.div`
  flex: 1;
  height: 107px;
  border: 2px groove #fff;
  padding-top: 11px;
`;
const Combo = styled.span`
  position: relative;
  display: block;
`;
const Select = styled.select`
  ${sunken}
  appearance: none;
  width: 153px;
  height: 24px;
  padding: 0 4px 0 3px;
  background: ${FACE};
  color: ${MID};
  opacity: 1;
`;
const ComboArrow = styled.span`
  ${raised}
  position: absolute;
  right: 2px;
  top: 2px;
  width: 20px;
  height: 20px;
  background: ${FACE};
  display: grid;
  place-items: center;
  pointer-events: none;
`;
const MeterResult = styled(Result)`
  margin: 4px 0 0 129px;
`;
const MeterFoot = styled.div`
  display: flex;
  padding: 5px 3px 0 5px;
`;
const ModeRow = styled.div`
  display: flex;
  gap: ${(p) => p.$gap}px;
  padding: 0 0 5px ${(p) => p.$pl}px;
`;
const Input = styled.div`
  display: flex;
  align-items: center;
  gap: 2px;
  margin: 16px 0 0 17px;
  height: 32px;
`;
const Grip = styled.svg`
  margin: auto 0 0 2px;
`;

function Meter() {
  const sel = useId();
  return (
    <MeterWindow>
      <Caption $active>
        <CaptionText>Измеритель нелинейных искажений-XDA1</CaptionText>
        <Sys kind="close" label="Закрыть измеритель" />
      </Caption>
      <MeterCaption>Общие нелинейные искажения(THD)</MeterCaption>
      <ReadoutFrame><Readout>0.003 %</Readout></ReadoutFrame>
      <MeterMain>
        <RunButtons>
          <Push $w={50} $h={32} $on>Старт</Push>
          <Push $w={50} $h={32}>Стоп</Push>
        </RunButtons>
        <MeterBox>
          <Field label="Основная частота." labelW={119} gap={9} value="5" valueAlign="center" w={100} unit="kHz" unitW={52} unitPad={3} disabled />
          <FieldRow $mt={13}>
            <RowLabel htmlFor={sel} $w={119} $gap={9}>Разрешение.</RowLabel>
            <Combo>
              <Select id={sel} disabled><option>500 Hz</option></Select>
              <ComboArrow><svg width="10" height="6" viewBox="0 0 10 6"><path d="M1 1h9L6 6z" fill="#fff" /><path d="M0 0h9L4.500 5z" fill={MID} /></svg></ComboArrow>
            </Combo>
          </FieldRow>
          <MeterResult $w={153}>500 Hz</MeterResult>
        </MeterBox>
      </MeterMain>
      <MeterFoot>
        <Group $w={220}>
          <Legend>Управление</Legend>
          <ModeRow $gap={4} $pl={7}>
            <Push $w={66} $on>THD</Push>
            <Push $w={66}>SINAD</Push>
            <Push $w={66} disabled>Уст...</Push>
          </ModeRow>
        </Group>
        <Group $w={77} $edges="2px 2px 2px 0">
          <Legend $x={6}>Экран</Legend>
          <ModeRow $gap={3} $pl={2}>
            <Push $w={32} $on>%</Push>
            <Push $w={32}>dB</Push>
          </ModeRow>
        </Group>
        <Input>Вх<Terminal /></Input>
        <Grip width="12" height="12" viewBox="0 0 12 12" fill={MID}>
          <path d="M8 0h2v2H8zM4 4h2v2H4zM8 4h2v2H8zM0 8h2v2H0zM4 8h2v2H4zM8 8h2v2H8z" />
        </Grip>
      </MeterFoot>
    </MeterWindow>
  );
}

/* ---------- taskbar ---------- */
const Taskbar = styled.footer`
  display: flex;
  align-items: center;
  height: 51px;
  flex: none;
  padding: 3px 2px 2px;
  background: ${FACE};
  box-shadow: inset 0 1px 0 #fff;
`;
const Start = styled(Push)`
  gap: 2px;
  font: bold 14px/20px ${UI};
`;
const Launch = styled.div`
  display: flex;
  align-items: center;
  justify-content: space-between;
  width: 332px;
  margin: 0 8px 0 17px;
`;
const IconButton = styled.button`
  border: 0;
  background: none;
  padding: 0;
`;
const Tasks = styled.div`
  display: flex;
  gap: 2px;
  flex: 1;
`;
const TaskButton = styled(Push)`
  ${(p) => p.$on && css`background: #fff;`}
`;
const Handle = styled.i`
  width: 2px;
  height: 42px;
  flex: none;
  border-left: 1px solid #fff;
  border-right: 1px solid ${MID};
  margin-left: ${(p) => p.$ml || 0}px;
`;
const Band = styled.div`
  display: flex;
  align-items: center;
  height: 46px;
  width: ${(p) => p.$w}px;
  padding-left: 5px;
  gap: 4px;
  flex: none;
  font-size: 13px;
  white-space: nowrap;
`;
const More = styled.button`
  border: 0;
  padding: 0;
  background: none;
  margin: 4px 7px 0 auto;
  align-self: flex-start;
`;
const BandLink = styled.button`
  display: flex;
  align-items: center;
  gap: 4px;
  border: 0;
  padding: 0;
  background: none;
  margin: 0 0 17px 11px;
`;
const Lang = styled.div`
  display: flex;
  align-items: center;
  gap: 14px;
  width: 84px;
  padding: 0 0 4px 9px;
  flex: none;
  font: 14px/16px ${UI};
`;
const Tray = styled.div`
  display: flex;
  align-items: center;
  width: 258px;
  height: 46px;
  padding: 0 2px 0 7px;
  gap: 10px;
  flex: none;
  border: 1px solid;
  border-color: ${MID} #fff #fff ${MID};
`;
const Clock = styled.time`
  flex: 1;
  text-align: center;
  font-size: 14px;
  line-height: 20px;
  white-space: nowrap;
`;

function Chevrons({ up }) {
  return up
    ? <svg width="8" height="10" viewBox="0 0 8 10" fill="none" stroke="#000" strokeWidth="1.300"><path d="M1 4l3-3 3 3M1 8l3-3 3 3" /></svg>
    : <svg width="10" height="7" viewBox="0 0 10 7" fill="none" stroke="#000" strokeWidth="1.300"><path d="M1 1l2.500 2.500L1 6M5 1l2.500 2.500L5 6" /></svg>;
}
function Chrome({ square }) {
  return square ? (
    <svg width="40" height="40" viewBox="0 0 40 40">
      <path d="M0 0h40v8H20L10 26 0 8z" fill="#d85140" /><path d="M0 6l12 20 12 6-5 8H0z" fill="#2a9d63" /><path d="M20 7h20v33H23l8-14z" fill="#fccf45" />
      <circle cx="20" cy="20" r="12" fill="#fff" /><circle cx="20" cy="20" r="10" fill="#4a86f0" />
    </svg>
  ) : (
    <svg width="38" height="38" viewBox="0 0 38 38">
      <path d="M19 19L2.800 9.800A18.500 18.500 0 0 1 35 10z" fill="#d64a3e" /><path d="M19 19L18 37.500A18.500 18.500 0 0 1 3 9.500z" fill="#229a56" />
      <path d="M19 19l16-8.500A18.500 18.500 0 0 1 18 37.500L26 23z" fill="#fdd03c" /><path d="M19 10h16.500l1 3-9 6z" fill="#fdd03c" />
      <circle cx="19" cy="19" r="8.500" fill="#fff" /><circle cx="19" cy="19" r="6.800" fill="#4285f4" />
    </svg>
  );
}
function Notepad() {
  return (
    <svg width="40" height="38" viewBox="0 0 40 38">
      <path d="M4 3h30l2 32H2z" fill="#f4f4f4" stroke="#999" /><path d="M2 32h34v4H2z" fill="#aaa" /><path d="M5 2h28v4H5z" fill="#b8a428" />
      <path d="M7 0v6M11 0v6M15 0v6M19 0v6M23 0v6M27 0v6M31 0v6" stroke="#6a601a" strokeWidth="1.500" />
      <path d="M6 12h25M6 17h24M6 22h18M6 27h22" stroke="#a0a0a0" /><path d="M14 27l2-5 17-8 3 4-17 8z" fill="#d89838" stroke="#7a4c18" /><path d="M32 14l3-1.500 3 4-3 2z" fill="#d85040" />
    </svg>
  );
}
function Calc() {
  return (
    <svg width="28" height="38" viewBox="0 0 28 38">
      <rect x=".5" y=".5" width="27" height="37" rx="2" fill="#8cb8dc" stroke="#5f8cb4" /><rect x="3" y="3" width="22" height="13" fill="#e4f2fc" stroke="#fff" />
      <path d="M10 5h11" stroke="#e0a040" strokeWidth="2" /><path d="M19 9h3v5h-3z" fill="none" stroke="#386898" />
      {[20, 25, 30].map((y) => [3, 8, 13, 18].map((x) => <rect key={`${x}-${y}`} x={x} y={y} width="4" height="3.500" fill="#e8f4ff" />))}
      <path d="M23 20h3v4h-3z" fill="#e8f4ff" /><path d="M22 28h4v7h-4z" fill="#e89830" />
    </svg>
  );
}
function Folder({ size = 40 }) {
  return (
    <svg width={size} height={size} viewBox="0 0 40 40">
      <path d="M2 5h7l2-3h6l2 4h18l2 4v22H2z" fill="#e4c464" /><path d="M6 4h9M17 6h9M27 8h8" stroke="#fff" strokeWidth="2" />
      <path d="M5 4h3" stroke="#2aa040" strokeWidth="2" /><path d="M16 6h3" stroke="#d04030" strokeWidth="2" /><path d="M27 8h3" stroke="#3080d0" strokeWidth="2" />
      <path d="M1 10h17l2 2h19l-2 24H3z" fill="#f4de84" stroke="#d8b850" /><path d="M6 38l3-14q0-2 3-2h17q3 0 3 2l4 14h-8l-2-8H15l-2 8z" fill="#80c8e8" stroke="#50a0c8" />
    </svg>
  );
}
function Palette() {
  return (
    <svg width="40" height="40" viewBox="0 0 40 40">
      <path d="M2 22Q5 5 20 5q15 1 15 16-2 14-10 15-6-2-5-9-8 4-12 3-6-2-6-8z" fill="#a8d0ea" stroke="#6898bc" />
      <circle cx="8" cy="21" r="3" fill="#d84838" /><circle cx="13" cy="13" r="3" fill="#64b850" /><circle cx="21" cy="12" r="3.500" fill="#f0b840" /><circle cx="17" cy="23" r="2.500" fill="#e8f4fc" />
      <path d="M32 9l3 1L24 37l-3 1z" fill="#e08838" stroke="#a85c20" strokeWidth=".7" /><path d="M30 8q1-6 8-7 2 8-3 11z" fill="#b88450" />
    </svg>
  );
}
function Flag() {
  return (
    <svg width="20" height="19" viewBox="0 0 20 19">
      <path d="M3 3q3-2 7 0L9 9Q5 7 2 9z" fill="#e86030" /><path d="M11 3q4 2 7 0l-2 6q-4 2-6 0z" fill="#78b840" />
      <path d="M2 10q3-2 7 0l-2 6Q3 14 0 16z" fill="#4088d0" /><path d="M10 10q3 2 6 0l-1 6q-4 2-7 0z" fill="#f4c030" />
    </svg>
  );
}

function Bottom() {
  return (
    <Taskbar>
      <Start $w={61} $h={46}><Flag />Пуск</Start>
      <Handle $ml={8} />
      <Launch>
        <IconButton aria-label="Chrome"><Chrome square /></IconButton>
        <IconButton aria-label="Блокнот"><Notepad /></IconButton>
        <IconButton aria-label="Калькулятор"><Calc /></IconButton>
        <IconButton aria-label="Стрелка"><svg width="40" height="40" viewBox="0 0 40 40"><path d="M0 0h40v40h-3l-8-9-8 9H0V20l10-9L0 1zM11 11v18h18V11z" fill="#007c00" fillRule="evenodd" /></svg></IconButton>
        <IconButton aria-label="Проводник"><Folder /></IconButton>
        <IconButton aria-label="Paint"><Palette /></IconButton>
      </Launch>
      <Tasks>
        <TaskButton $w={56} $h={46} aria-label="Chrome 1"><Chrome /></TaskButton>
        <TaskButton $w={56} $h={46} aria-label="Chrome 2"><Chrome /></TaskButton>
        <TaskButton $w={56} $h={46} $on aria-label="Multisim"><CircuitLogo size={38} /></TaskButton>
      </Tasks>
      <Handle />
      <Band $w={82}>Ссылки<More aria-label="Ещё ссылки"><Chevrons /></More></Band>
      <Handle />
      <Band $w={186}>Рабочий стол<BandLink><Folder size={20} />Библ</BandLink><More aria-label="Ещё"><Chevrons /></More></Band>
      <Handle />
      <Lang>
        RU
        <svg width="19" height="19" viewBox="0 0 19 19"><circle cx="9.500" cy="9.500" r="8.500" fill="#1428b4" stroke="#8090d8" /><path d="M6.500 7q0-3 3-3t3 2.500q0 1.500-3 3.500v1.500M9.500 13v2" fill="none" stroke="#fff" strokeWidth="2" /></svg>
        <svg width="9" height="19" viewBox="0 0 9 19"><path d="M3.500 3V1.500h5v4H7M1.500 3.500h5v4h-5z" fill="none" stroke="#000" /><path d="M2 14h5l-2.500 3z" /></svg>
      </Lang>
      <Tray>
        <Chevrons up />
        <svg width="20" height="20" viewBox="0 0 20 20" fill="#fff" stroke="#666"><path d="M2 3.500h2V2h4v1.500h3V18H1.500V3.500z" /><path d="M12 7.500h7v4q-1 2-3 2v4h-1v-4q-3 0-3-2zM13.500 4v3M17.500 4v3" /></svg>
        <svg width="20" height="20" viewBox="0 0 20 20" fill="none" stroke="#777"><path d="M1 7h3l5-5v16l-5-5H1z" fill="#fff" /><path d="M12 7q2 3 0 6M14.500 5q3.500 5 0 10M17 3q4 7 0 14" /></svg>
        <svg width="18" height="18" viewBox="0 0 18 18" fill="#fff" stroke="#777"><path d="M1 13h2v3H1zM4.500 11h2v5h-2zM8 8h2v8H8zM11.500 5h2v11h-2zM15 2h2v14h-2z" /></svg>
        <svg width="20" height="20" viewBox="0 0 20 20"><path d="M2 1v18M2.500 2q4-2 7 0t8 0v8q-4 2-8 0t-7 0" fill="#fff" stroke="#777" /><circle cx="14" cy="14" r="5" fill="#d83030" /><path d="M12 12l4 4M16 12l-4 4" stroke="#fff" strokeWidth="1.500" /></svg>
        <Clock>14:41<br />01.03.2021</Clock>
        <svg width="20" height="16" viewBox="0 0 20 16"><path d="M2 1h17l-1 11H1z" fill="#3c80dc" stroke="#a8c8f0" /><path d="M0 14h19" stroke="#556" /></svg>
      </Tray>
    </Taskbar>
  );
}

export default function App() {
  return (
    <Desktop>
      <Global />
      <Frame>
        <AppTitle $h={24}>
          <CircuitLogo size={18} />
          <CaptionText as="h1">JLH1969 - Multisim - [JLH1969 *]</CaptionText>
          <SysGroup $gap={2}><Sys kind="min" label="Свернуть" /><Sys kind="restore" label="Восстановить" /><Sys kind="close" label="Закрыть" /></SysGroup>
        </AppTitle>
        <MenuBar>
          <SchemeIcon />
          <MenuList>
            {MENU.map(([a, u, b]) => <li key={`${a}${u}${b}`}><MenuItem>{a}{u && <u>{u}</u>}{b}</MenuItem></li>)}
          </MenuList>
          <SysGroup $mt={5}><Sys kind="min" label="Свернуть схему" /><Sys kind="restore" label="Восстановить схему" /><Sys kind="close" label="Закрыть схему" /></SysGroup>
        </MenuBar>
        <ToolLine>
          <FileTools />
          <Bar $end $w={84} $px={10} $gap={5}>
            <SimSwitch aria-label="Пуск моделирования"><svg width="27" height="12" viewBox="0 0 27 12"><path d="M0 0h14v12H0z" fill="#999" /><path d="M2 1l4 1v10L2 10zM8 3h4v5H8zM21.500 4v5" stroke="#000" fill="#ddd" /></svg></SimSwitch>
            <SimSwitch aria-label="Пауза"><svg width="6" height="7" viewBox="0 0 6 7"><path d="M0 0h2v7H0zM4 0h2v7H4z" /></svg></SimSwitch>
          </Bar>
        </ToolLine>
        <ToolLine>
          <PartsBar $w={471}>
            {PARTS.map((n, i) => <Tool key={n + i} aria-label={`Компонент ${i + 1}`}><Glyph name={n} off /></Tool>)}
            <Rule $h={22} /><Tool aria-label="Иерархия"><Glyph name="tree" off /></Tool>
            <Rule $h={22} /><Tool aria-label="Узел"><Glyph name="node" off /></Tool><Tool aria-label="Блок"><Glyph name="box" off /></Tool>
          </PartsBar>
          <Bar $w={320} $px={12}>{BLUE.map((d, i) => <BlueTool key={d} d={d} name={`Группа ${i + 1}`} />)}</Bar>
          <Bar $w={233} $px={9}>
            <ToggleTool aria-label="Указатель"><svg width="14" height="16" viewBox="0 0 14 16"><path d="M4 2v11l9-1z" fill={MID} /></svg></ToggleTool>
            <Tool aria-label="Пауза 2"><svg width="10" height="12" viewBox="0 0 10 12"><path d="M1 1h3v11H1zM6 1h3v11H6z" fill="#000060" /></svg></Tool>
            <Tool aria-label="Стоп-сигнал"><svg width="10" height="10" viewBox="0 0 10 10"><rect width="10" height="10" fill="#f00000" /></svg></Tool>
            <Tool aria-label="Точка"><svg width="12" height="12" viewBox="0 0 12 12"><circle cx="6" cy="6" r="5" fill={MID} /></svg></Tool>
            {['step', 'step', 'step', 'step', 'hand', 'hand'].map((n, i) => <Tool key={i} aria-label={`Шаг ${i + 1}`}><Glyph name={n} off /></Tool>)}
          </Bar>
          <Bar $end $w={124} $px={13}>
            <Tool aria-label="Увеличить"><Zoomer mark={<path d="M4 7h6M7 4v6" stroke="#a00000" strokeWidth="2" />} /></Tool>
            <Tool aria-label="Уменьшить"><Zoomer mark={<path d="M4 7h6" stroke="#008000" strokeWidth="2" />} /></Tool>
            <Tool aria-label="Область"><Zoomer mark={<path d="M5 5h4v4H5z" fill="none" stroke="#000" />} /></Tool>
            <Tool aria-label="Весь лист"><Zoomer /></Tool>
            <Tool aria-label="Полный экран"><svg width="16" height="15" viewBox="0 0 16 15"><path d="M.5.500h15v14H.5z" fill="#fff" stroke="#000" /><path d="M3 3h10v9H3z" fill="#70e0e8" stroke="#000" /><path d="M4 5h5M4 7h8M4 9h6" stroke="#000" /></svg></Tool>
          </Bar>
        </ToolLine>
        <ToolLine>
          <Bar $w={400} $px={13}>
            <Tool aria-label="Рисунок"><svg width="15" height="15" viewBox="0 0 15 15"><path d="M.5.500h14v14H.5z" fill="#ffff20" stroke="#b09000" /><path d="M7 2h6v6H7z" fill="#e02020" stroke="#000" /><circle cx="5" cy="8" r="3" fill="#10a030" stroke="#000" /><path d="M5 13l8-8" stroke="#0020c0" strokeWidth="2" /></svg></Tool>
            {['poly', 'arc', 'ellipse', 'rect', 'zig', 'line'].map((n) => <Tool key={n} aria-label={n}><Glyph name={n} /></Tool>)}
            <Tool>A</Tool>
          </Bar>
        </ToolLine>
        <ToolLine $h={28}>
          <Bar $w={400} $px={13}>
            {['check', 'para', 'jump', 'globes', 'report', 'doc', 'report'].map((n, i) => <Tool key={i} aria-label={`Отчёт ${i + 1}`}><Glyph name={n} off /></Tool>)}
            <Box $w={140} aria-label="Вариант" disabled />
          </Bar>
        </ToolLine>
        <Middle>
          <Document>
            <Sheet><Schematic /></Sheet>
            <SheetTabs>
              <SheetTab $w={81}><SchemeIcon size={20} />Схема1</SheetTab>
              <SheetTab $w={98} $on><SchemeIcon size={20} />JLH1969 *</SheetTab>
            </SheetTabs>
          </Document>
          <InstrumentBar>
            {SIDE.map((d, i) => <SideTool key={i} aria-label={`Прибор ${i + 1}`}><Instrument d={d} i={i} /></SideTool>)}
            <HRule />
            <SideTool aria-label="Пробник 1.4v"><svg width="16" height="13" viewBox="0 0 16 13"><path d="M1 1l5 0-1 3h9l1.500 2v4l-1.500 2H3L1 10V5z" fill="#f4f420" stroke="#888800" /><text x="2" y="11" fontSize="7" fontWeight="bold" fontFamily="Liberation Sans">1.4v</text></svg></SideTool>
            <svg width="4" height="6" viewBox="0 0 4 6"><path d="M0 0l4 3-4 3z" /></svg>
            <SideTool aria-label="Датчик"><svg width="16" height="15" viewBox="0 0 16 15"><path d="M2 1h12v13H2z" fill={MID} stroke={MID} strokeDasharray="1 1" strokeWidth="2" /></svg></SideTool>
            <svg width="4" height="6" viewBox="0 0 4 6"><path d="M0 0l4 3-4 3z" fill={MID} /></svg>
            <HRule />
            <svg width="8" height="10" viewBox="0 0 8 10" fill="none" stroke="#000" strokeWidth="1.300"><path d="M1 1l3 3 3-3M1 5l3 3 3-3" /></svg>
          </InstrumentBar>
        </Middle>
        <ResultPane>
          <PaneButtons>
            <TinyButton aria-label="Закрыть панель"><svg width="7" height="7" viewBox="0 0 7 7"><path d="M1 1l5 5M6 1L1 6" stroke="#000" strokeWidth="1.800" /></svg></TinyButton>
            <TinyButton aria-label="Вправо"><svg width="4" height="6" viewBox="0 0 4 6"><path d="M0 0l3 3-3 3z" fill={MID} /></svg></TinyButton>
          </PaneButtons>
          <PaneTabs>
            <PaneTab $w={81} $on>Результаты</PaneTab>
            <PaneTab $w={46}>Цепи</PaneTab>
            <PaneTab $w={86}>Компоненты</PaneTab>
          </PaneTabs>
        </ResultPane>
        <Status>
          <span>Прибор: Обозначение(XSA1);</span>
          <Leds>{[0, 1, 2, 3, 4].map((n) => <Led key={n} />)}</Leds>
        </Status>
        <Generator />
        <Analyser />
        <Meter />
      </Frame>
      <Bottom />
    </Desktop>
  );
}
